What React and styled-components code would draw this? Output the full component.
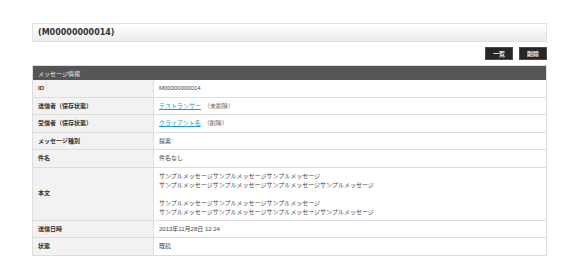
import React from 'react'
import styled, { createGlobalStyle } from 'styled-components'

const GlobalStyle = createGlobalStyle`
  html, body {
    margin: 0;
    padding: 0;
    background: #fff;
  }
  body {
    font-family: "Liberation Sans", "Noto Sans CJK JP", sans-serif;
    color: #444;
  }
`

const Page = styled.div`
  width: 515px;
  padding: 23px 0 0 32px;
`

const TitleBox = styled.div`
  height: 17px;
  display: flex;
  align-items: center;
  padding: 0 5px;
  border: 1px solid #e2e2e2;
  background: linear-gradient(#ffffff, #ececec);
`

const Title = styled.h1`
  margin: 0;
  font-family: "DejaVu Sans", "Noto Sans CJK JP", sans-serif;
  font-size: 8px;
  font-weight: bold;
  color: #333;
`

const Actions = styled.div`
  display: flex;
  justify-content: flex-end;
  gap: 6px;
  margin: 5px 0 5px;
`

const Button = styled.button`
  width: 28px;
  height: 13px;
  padding: 0;
  border: 1px solid #4a4a4a;
  background: #262626;
  color: #f2f2f2;
  font-family: "Noto Sans CJK JP", sans-serif;
  font-size: 6px;
  font-weight: bold;
  line-height: 11px;
  cursor: pointer;
`

const Table = styled.table`
  width: 100%;
  border-collapse: collapse;
  border: 1px solid #dedede;
  font-size: 6px;
`

const Caption = styled.th`
  height: 14px;
  padding: 0 5px;
  background: #555;
  color: #eee;
  font-weight: normal;
  text-align: left;
  border: 0;
`

const Label = styled.th`
  width: 110px;
  padding: 4px 5px 3px;
  line-height: 9.5px;
  background: #f2f2f2;
  color: #333;
  font-weight: bold;
  text-align: left;
  vertical-align: middle;
  border-bottom: 1px solid #dedede;
  border-right: 1px solid #dedede;
`

const Value = styled.td`
  padding: 4px 5px 3px;
  line-height: ${p => (p.$multi ? '9px' : '9.5px')};
  background: #fff;
  color: #444;
  border-bottom: 1px solid #dedede;
`

const Link = styled.a`
  color: #1a9bd7;
  text-decoration: underline;
`

const Note = styled.span`
  color: #666;
  margin-left: 3px;
`

const rows = [
  ['ID', 'M00000000014'],
  ['送信者（保存状態）', <><Link href="#">テストランサー</Link><Note>（未削除）</Note></>],
  ['受信者（保存状態）', <><Link href="#">クライアント名</Link><Note>（削除）</Note></>],
  ['メッセージ種別', '提案'],
  ['件名', '件名なし'],
]

const sample = 'サンプルメッセージサンプルメッセージサンプルメッセージ'
const sampleLong = 'サンプルメッセージサンプルメッセージサンプルメッセージサンプルメッセージ'

export default function App() {
  return (
    <Page>
      <GlobalStyle />
      <TitleBox>
        <Title>(M00000000014)</Title>
      </TitleBox>
      <Actions>
        <Button>一覧</Button>
        <Button>削除</Button>
      </Actions>
      <Table>
        <thead>
          <tr>
            <Caption colSpan={2}>メッセージ情報</Caption>
          </tr>
        </thead>
        <tbody>
          {rows.map(([label, value]) => (
            <tr key={label}>
              <Label>{label}</Label>
              <Value>{value}</Value>
            </tr>
          ))}
          <tr>
            <Label>本文</Label>
            <Value $multi>
              {sample}<br />
              {sampleLong}<br />
              <br />
              {sample}<br />
              {sampleLong}
            </Value>
          </tr>
          <tr>
            <Label>送信日時</Label>
            <Value>2013年11月28日 12:24</Value>
          </tr>
          <tr>
            <Label>状態</Label>
            <Value>既読</Value>
          </tr>
        </tbody>
      </Table>
    </Page>
  )
}
